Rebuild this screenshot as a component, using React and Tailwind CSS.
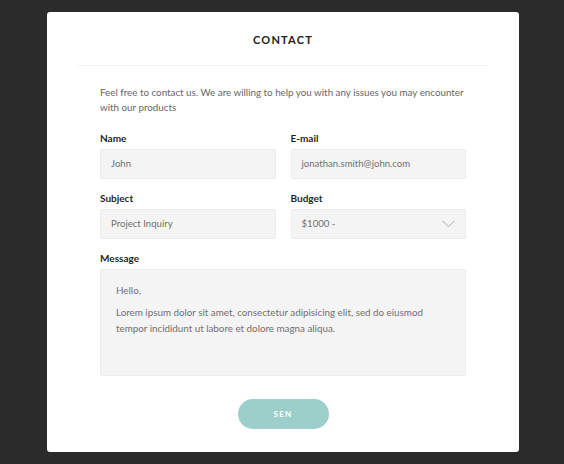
import React from 'react';

function Field({ label, children, className = '' }) {
  return (
    <div className={`flex flex-col ${className}`}>
      <label className="text-[10px] leading-[12px] font-bold text-[#1f1f1f]">{label}</label>
      {children}
    </div>
  );
}

function Box({ value, chevron = false }) {
  return (
    <div className="mt-[5px] h-[30px] bg-[#f4f4f4] border border-[#ececec] rounded-[2px] flex items-center justify-between pl-[10px] pr-[10px] text-[9.6px] text-[#707070]">
      <span>{value}</span>
      {chevron && (
        <svg width="13" height="8" viewBox="0 0 13 8" fill="none">
          <path d="M0.5 0.8 L6.5 6.8 L12.5 0.8" stroke="#a8a8a8" strokeWidth="1" />
        </svg>
      )}
    </div>
  );
}

export default function App() {
  return (
    <div className="w-[564px] h-[464px] bg-[#2b2b2b] pl-[47px] pt-[12px] overflow-hidden" style={{ fontFamily: 'Lato, "Open Sans", sans-serif' }}>
      <div className="w-[472px] h-[440px] bg-white rounded-[3px] flex flex-col">
        {/* Header */}
        <h1 className="pt-[21px] text-center text-[11px] leading-[14px] font-bold tracking-[0.11em] text-[#222]">CONTACT</h1>
        <div className="mt-[18px] mx-[30px] border-t border-[#f1f1f1]" />

        <div className="px-[53px]">
          <p className="mt-[19px] mr-[-6px] text-[9.8px] leading-[15px] text-[#666]">
            Feel free to contact us. We are willing to help you with any issues you may encounter with our products
          </p>

          <div className="mt-[17px] grid grid-cols-2 gap-x-[15px]">
            <Field label="Name"><Box value="John" /></Field>
            <Field label="E-mail"><Box value="jonathan.smith@john.com" /></Field>
          </div>

          <div className="mt-[13px] grid grid-cols-2 gap-x-[15px]">
            <Field label="Subject"><Box value="Project Inquiry" /></Field>
            <Field label="Budget"><Box value="$1000 -" chevron /></Field>
          </div>

          <Field label="Message" className="mt-[13px]">
            <div className="mt-[5px] h-[107px] bg-[#f4f4f4] border border-[#ececec] rounded-[2px] pl-[15px] pr-[12px] pt-[12px] text-[9.8px] leading-[16px] text-[#707070]">
              <p>Hello,</p>
              <p className="mt-[6px]">Lorem ipsum dolor sit amet, consectetur adipisicing elit, sed do eiusmod tempor incididunt ut labore et dolore magna aliqua.</p>
            </div>
          </Field>

          <div className="mt-[23px] flex justify-center">
            <button className="w-[91px] h-[30px] rounded-full bg-[#9dcfca] text-white text-[8px] font-bold tracking-[0.15em]">SEN</button>
          </div>
        </div>
      </div>
    </div>
  );
}
